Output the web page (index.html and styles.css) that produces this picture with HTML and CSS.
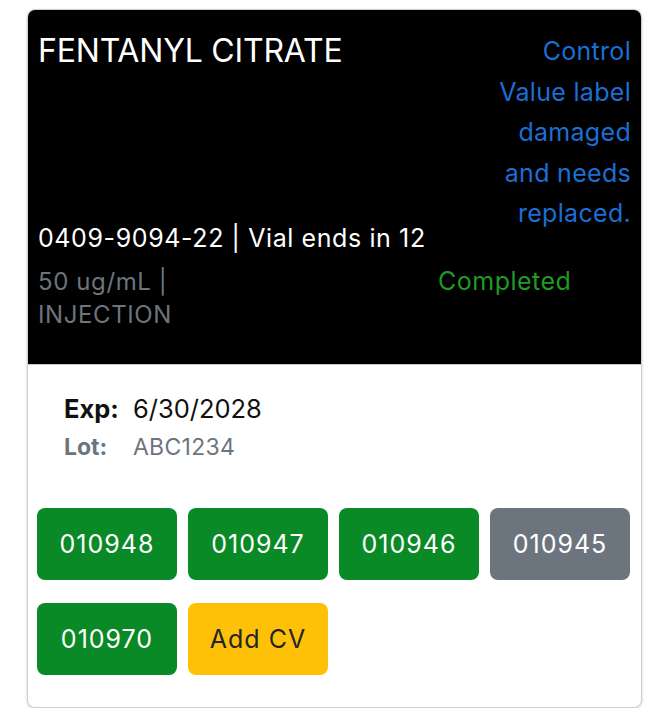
FILE: index.html
```html
<!DOCTYPE html>
<html lang="en">
<head>
<meta charset="utf-8">
<title>Fentanyl Citrate</title>
<link rel="stylesheet" href="styles.css">
</head>
<body>
<div class="card">
  <div class="card-header">
    <div class="header-top">
      <div class="header-main">
        <div class="title">FENTANYL CITRATE</div>
        <div class="ndc">0409-9094-22 | Vial ends in 12</div>
      </div>
      <div class="note">Control Value label damaged and needs replaced.</div>
    </div>
    <div class="meta">
      <div class="form">50 ug/mL | INJECTION</div>
      <div></div>
      <div class="status">Completed</div>
    </div>
  </div>
  <div class="card-body">
    <div class="info">
      <div class="info-label exp">Exp:</div>
      <div class="info-value exp">6/30/2028</div>
      <div class="info-label lot">Lot:</div>
      <div class="info-value lot">ABC1234</div>
    </div>
    <div class="buttons">
      <button class="btn btn-success">010948</button>
      <button class="btn btn-success">010947</button>
      <button class="btn btn-success">010946</button>
      <button class="btn btn-secondary">010945</button>
      <button class="btn btn-success">010970</button>
      <button class="btn btn-warning">Add CV</button>
    </div>
  </div>
</div>
</body>
</html>
```

FILE: styles.css
```css
* { box-sizing: border-box; }

html, body {
  margin: 0;
  padding: 0;
  background: #ffffff;
}

body {
  padding: 9px 28px 0 27px;
  font-family: Inter, "Noto Sans", "Liberation Sans", sans-serif;
  font-size: 25px;
  line-height: 1.5;
  color: #111111;
}

.card {
  border: 1px solid #cfcfcf;
  border-radius: 8px;
  box-shadow: 0 1px 3px rgba(0, 0, 0, 0.18);
  overflow: hidden;
  background: #ffffff;
}

.card-header {
  background: #000000;
  border-bottom: 1px solid #c8c8c8;
  padding: 21px 10px 33px 10px;
}

.header-top {
  display: flex;
}

.header-main {
  flex: 1;
  display: flex;
  flex-direction: column;
}

.title {
  color: #ffffff;
  font-size: 32px;
  line-height: 40px;
  letter-spacing: -0.2px;
}

.ndc {
  margin-top: auto;
  color: #ffffff;
  font-size: 25px;
  line-height: 37px;
  letter-spacing: 0.6px;
}

.note {
  width: 150px;
  text-align: right;
  color: #1b6fd4;
  font-size: 25px;
  line-height: 40.5px;
  letter-spacing: 0.3px;
  padding-bottom: 23px;
}

.meta {
  display: grid;
  grid-template-columns: 200px 200px 1fr;
  margin-top: 8px;
  line-height: 33px;
}

.form {
  color: #6c757d;
  font-size: 24px;
  letter-spacing: 0.6px;
}

.status {
  color: #1f9a26;
  font-size: 25px;
  letter-spacing: 0.5px;
}

.card-body {
  padding: 24px 11px 32px 9px;
}

.info {
  display: grid;
  grid-template-columns: auto 1fr;
  column-gap: 14px;
  padding-left: 27px;
}

.info-label {
  font-weight: 700;
}

.info-label.exp,
.info-value.exp {
  font-size: 25.5px;
  line-height: 39px;
  color: #111111;
}

.info-label.lot,
.info-value.lot {
  font-size: 23px;
  line-height: 38px;
  color: #6c757d;
}

.info-value.lot {
  letter-spacing: 0.3px;
}

.buttons {
  display: grid;
  grid-template-columns: repeat(4, 1fr);
  column-gap: 11px;
  row-gap: 23px;
  margin-top: 42px;
}

.btn {
  height: 72px;
  padding: 0;
  border: none;
  border-radius: 8px;
  font-family: Inter, "Noto Sans", "Liberation Sans", sans-serif;
  font-size: 25px;
  letter-spacing: 1px;
  color: #ffffff;
}

.btn-success { background: #0a8a27; }
.btn-secondary { background: #6c757d; }
.btn-warning { background: #ffc107; color: #212529; }
```
